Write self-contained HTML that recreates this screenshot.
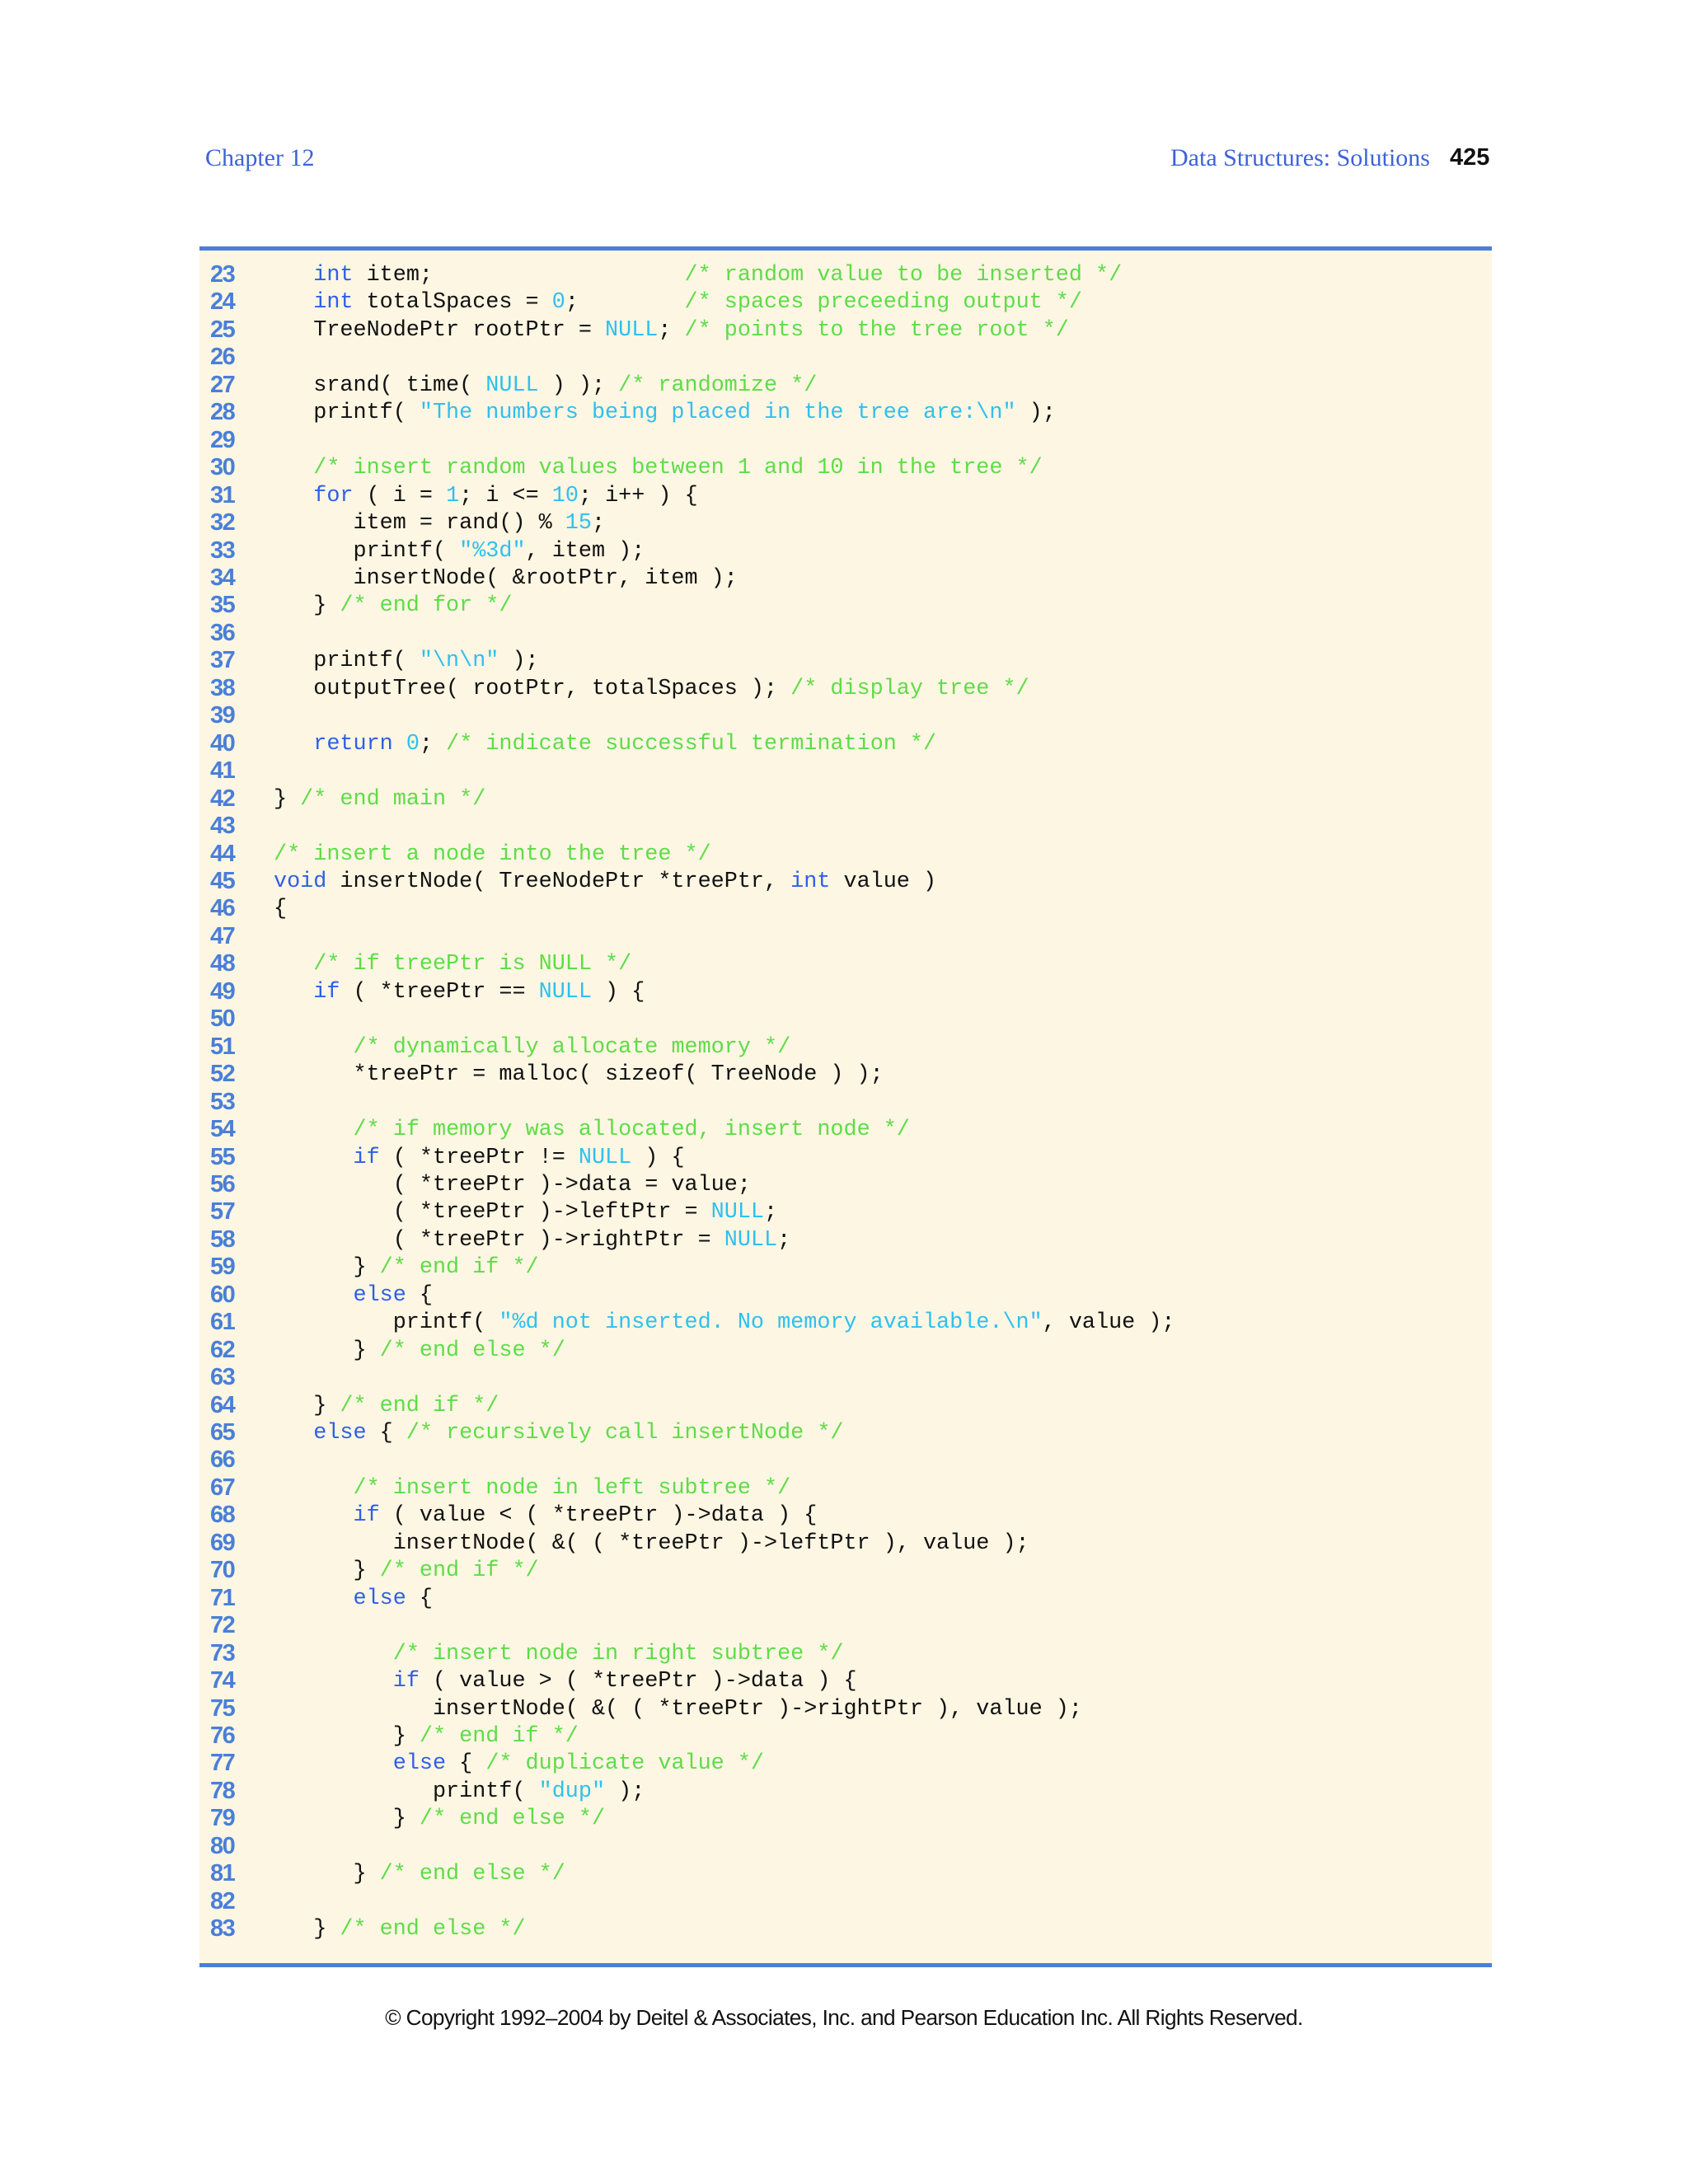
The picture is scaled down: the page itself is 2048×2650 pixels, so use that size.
<!DOCTYPE html>
<html><head><meta charset="utf-8"><style>
body{margin:0;width:2048px;height:2650px;background:#fff;position:relative;overflow:hidden}
.hdr{position:absolute;top:175px;font-family:"Liberation Serif",serif;font-size:30px;color:#3d63d6}
.box{position:absolute;left:242px;top:299px;width:1568px;height:2078px;background:#fdf6e3;border-top:5px solid #4a7fd8;border-bottom:5px solid #4a7fd8}
.nums{position:absolute;left:255px;top:317px;font-family:"Liberation Sans",sans-serif;font-weight:bold;font-size:29px;line-height:33.45px;color:#4a7fd8;letter-spacing:-1.5px;margin:0}
pre.code{position:absolute;left:332px;top:318px;margin:0;font-family:"Liberation Mono",monospace;font-size:26.8px;line-height:33.45px;color:#111}
.k{color:#2f5fe6}.c{color:#5fdc48}.l{color:#2ec0ef}
.copy{position:absolute;top:2433px;left:0;width:2048px;text-align:center;font-family:"Liberation Sans",sans-serif;font-size:26.2px;color:#111;letter-spacing:-0.6px}
</style></head><body>
<div class="hdr" style="left:249px">Chapter 12</div>
<div class="hdr" style="left:1420px">Data Structures: Solutions</div>
<div style="position:absolute;left:1759px;top:175px;font-family:'Liberation Sans',sans-serif;font-weight:bold;font-size:29px;color:#111">425</div>
<div class="box"></div>
<pre class="nums">23
24
25
26
27
28
29
30
31
32
33
34
35
36
37
38
39
40
41
42
43
44
45
46
47
48
49
50
51
52
53
54
55
56
57
58
59
60
61
62
63
64
65
66
67
68
69
70
71
72
73
74
75
76
77
78
79
80
81
82
83</pre>
<pre class="code">   <span class="k">int</span> item;                   <span class="c">/* random value to be inserted */</span>
   <span class="k">int</span> totalSpaces = <span class="l">0</span>;        <span class="c">/* spaces preceeding output */</span>
   TreeNodePtr rootPtr = <span class="l">NULL</span>; <span class="c">/* points to the tree root */</span>

   srand( time( <span class="l">NULL</span> ) ); <span class="c">/* randomize */</span>
   printf( <span class="l">"The numbers being placed in the tree are:\n"</span> );

   <span class="c">/* insert random values between 1 and 10 in the tree */</span>
   <span class="k">for</span> ( i = <span class="l">1</span>; i &lt;= <span class="l">10</span>; i++ ) {
      item = rand() % <span class="l">15</span>;
      printf( <span class="l">"%3d"</span>, item );
      insertNode( &amp;rootPtr, item );
   } <span class="c">/* end for */</span>

   printf( <span class="l">"\n\n"</span> );
   outputTree( rootPtr, totalSpaces ); <span class="c">/* display tree */</span>

   <span class="k">return</span> <span class="l">0</span>; <span class="c">/* indicate successful termination */</span>

} <span class="c">/* end main */</span>

<span class="c">/* insert a node into the tree */</span>
<span class="k">void</span> insertNode( TreeNodePtr *treePtr, <span class="k">int</span> value )
{

   <span class="c">/* if treePtr is NULL */</span>
   <span class="k">if</span> ( *treePtr == <span class="l">NULL</span> ) {

      <span class="c">/* dynamically allocate memory */</span>
      *treePtr = malloc( sizeof( TreeNode ) );

      <span class="c">/* if memory was allocated, insert node */</span>
      <span class="k">if</span> ( *treePtr != <span class="l">NULL</span> ) {
         ( *treePtr )-&gt;data = value;
         ( *treePtr )-&gt;leftPtr = <span class="l">NULL</span>;
         ( *treePtr )-&gt;rightPtr = <span class="l">NULL</span>;
      } <span class="c">/* end if */</span>
      <span class="k">else</span> {
         printf( <span class="l">"%d not inserted. No memory available.\n"</span>, value );
      } <span class="c">/* end else */</span>

   } <span class="c">/* end if */</span>
   <span class="k">else</span> { <span class="c">/* recursively call insertNode */</span>

      <span class="c">/* insert node in left subtree */</span>
      <span class="k">if</span> ( value &lt; ( *treePtr )-&gt;data ) {
         insertNode( &amp;( ( *treePtr )-&gt;leftPtr ), value );
      } <span class="c">/* end if */</span>
      <span class="k">else</span> {

         <span class="c">/* insert node in right subtree */</span>
         <span class="k">if</span> ( value &gt; ( *treePtr )-&gt;data ) {
            insertNode( &amp;( ( *treePtr )-&gt;rightPtr ), value );
         } <span class="c">/* end if */</span>
         <span class="k">else</span> { <span class="c">/* duplicate value */</span>
            printf( <span class="l">"dup"</span> );
         } <span class="c">/* end else */</span>

      } <span class="c">/* end else */</span>

   } <span class="c">/* end else */</span></pre>
<div class="copy">© Copyright 1992–2004 by Deitel &amp; Associates, Inc. and Pearson Education Inc. All Rights Reserved.</div>
</body></html>
